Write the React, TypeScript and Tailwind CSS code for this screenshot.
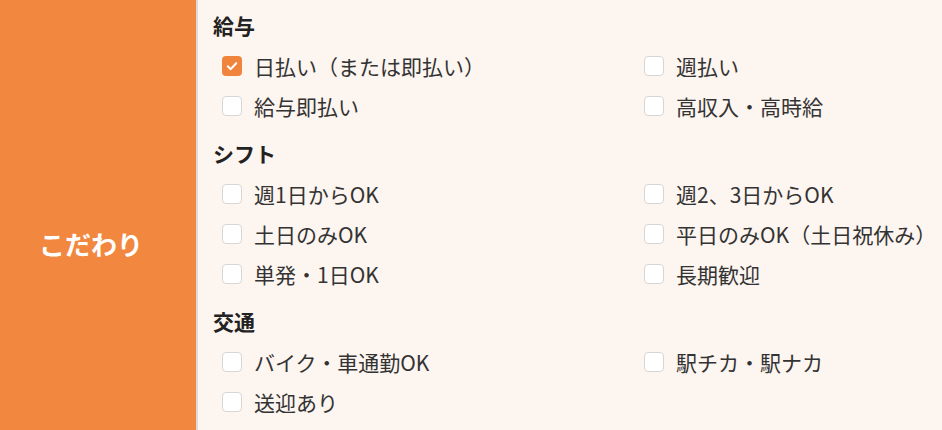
import React from "react";

interface optionProps {
  label: string;
  checked?: boolean;
}

const sections: { title: string; options: optionProps[] }[] = [
  {
    title: "給与",
    options: [
      { label: "日払い（または即払い）", checked: true },
      { label: "週払い" },
      { label: "給与即払い" },
      { label: "高収入・高時給" },
    ],
  },
  {
    title: "シフト",
    options: [
      { label: "週1日からOK" },
      { label: "週2、3日からOK" },
      { label: "土日のみOK" },
      { label: "平日のみOK（土日祝休み）" },
      { label: "単発・1日OK" },
      { label: "長期歓迎" },
    ],
  },
  {
    title: "交通",
    options: [
      { label: "バイク・車通勤OK" },
      { label: "駅チカ・駅ナカ" },
      { label: "送迎あり" },
    ],
  },
];

function Option({ label, checked }: optionProps) {
  return (
    <label className="flex h-10 items-center gap-3 cursor-pointer">
      {checked ? (
        <span className="flex h-5 w-5 items-center justify-center rounded-[4px] bg-[#f0843c]">
          <svg viewBox="0 0 20 20" className="h-3.5 w-3.5" fill="none">
            <path
              d="M4 10.5 L8.2 14.5 L16 6"
              stroke="white"
              strokeWidth="3"
              strokeLinecap="round"
              strokeLinejoin="round"
            />
          </svg>
        </span>
      ) : (
        <span className="h-5 w-5 rounded-[4px] border border-[#d6d6d6] bg-white" />
      )}
      <span className="text-[21px] leading-none text-[#333]">{label}</span>
    </label>
  );
}

export default function App() {
  return (
    <div
      className="flex min-h-[486px] w-[942px]"
      style={{ fontFamily: '"Noto Sans CJK JP", "Noto Sans", sans-serif' }}
    >
      {/* label column */}
      <div className="flex w-[196px] shrink-0 items-center bg-[#f2873f] pl-[39px]">
        <span className="text-[26px] font-bold text-white">こだわり</span>
      </div>
      {/* options */}
      <div className="flex flex-1 flex-col gap-3 border-l-2 border-[#dedad7] bg-[#fdf5f0] pl-[15px] pt-[10px]">
        {sections.map((section) => (
          <div key={section.title} className="flex flex-col gap-1.5">
            <h3 className="h-[30px] text-[21px] font-bold leading-[30px] text-[#222]">
              {section.title}
            </h3>
            <div className="grid grid-cols-[422px_1fr] pl-[9px]">
              {section.options.map((o) => (
                <Option key={o.label} {...o} />
              ))}
            </div>
          </div>
        ))}
      </div>
    </div>
  );
}
